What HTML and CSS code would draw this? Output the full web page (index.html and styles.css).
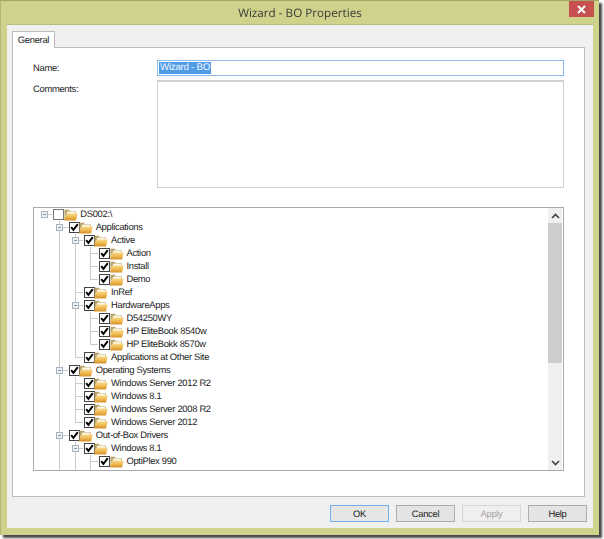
FILE: index.html
```html
<!DOCTYPE html>
<html lang="en">
<head>
<meta charset="utf-8">
<title>Wizard - BO Properties</title>
<link rel="stylesheet" href="styles.css">
</head>
<body>
<svg class="defs" width="0" height="0" aria-hidden="true">
  <defs>
    <linearGradient id="fg" x1="0" y1="0" x2="0" y2="1"><stop offset="0" stop-color="#f9d88a"/><stop offset=".5" stop-color="#f0b94f"/><stop offset="1" stop-color="#d48f28"/></linearGradient>
    <symbol id="on" viewBox="0 0 11 11"><rect x=".5" y=".5" width="10" height="10" fill="#fff" stroke="#444"/><path d="M2.2 5.2 4.4 7.8 8.8 2.2" fill="none" stroke="#000" stroke-width="2"/></symbol>
    <symbol id="off" viewBox="0 0 11 11"><rect x=".5" y=".5" width="10" height="10" fill="#fff" stroke="#777"/></symbol>
    <symbol id="dir" viewBox="0 0 14 12"><path d="M.5 11.5V.8h4.4l1 1.4h6v3H2z" fill="#b9a56c"/><path d="M3 2.6h8.4V6H3z" fill="#fdf8e8"/><path d="M2.2 4.6h11.6L12 11.6H0z" fill="url(#fg)"/></symbol>
  </defs>
</svg>
<div class="window">
  <header class="titlebar">
    <div class="title">Wizard - BO Properties</div>
    <div class="close"><svg width="9" height="9" viewBox="0 0 9 9"><path d="M1 1 8 8M8 1 1 8" stroke="#fff" stroke-width="2"/></svg></div>
  </header>
  <div class="client">
    <div class="tabs"><div class="tab">General</div></div>
    <div class="page">
      <div class="form">
        <label class="lbl">Name:</label>
        <div class="input"><span class="sel">Wizard - BO</span></div>
        <label class="lbl">Comments:</label>
        <div class="textarea"></div>
      </div>
      <div class="tree">
        <div class="nodes">
          <div class="row"><span class="c r"><b class="x"></b></span><svg class="chk"><use href="#off"/></svg><svg class="dir"><use href="#dir"/></svg><span class="t">DS002:\</span></div>
          <div class="row"><span class="c"></span><span class="c e"><b class="x"></b></span><svg class="chk"><use href="#on"/></svg><svg class="dir"><use href="#dir"/></svg><span class="t">Applications</span></div>
          <div class="row"><span class="c"></span><span class="c v"></span><span class="c e"><b class="x"></b></span><svg class="chk"><use href="#on"/></svg><svg class="dir"><use href="#dir"/></svg><span class="t">Active</span></div>
          <div class="row"><span class="c"></span><span class="c v"></span><span class="c v"></span><span class="c j"></span><svg class="chk"><use href="#on"/></svg><svg class="dir"><use href="#dir"/></svg><span class="t">Action</span></div>
          <div class="row"><span class="c"></span><span class="c v"></span><span class="c v"></span><span class="c j"></span><svg class="chk"><use href="#on"/></svg><svg class="dir"><use href="#dir"/></svg><span class="t">Install</span></div>
          <div class="row"><span class="c"></span><span class="c v"></span><span class="c v"></span><span class="c l"></span><svg class="chk"><use href="#on"/></svg><svg class="dir"><use href="#dir"/></svg><span class="t">Demo</span></div>
          <div class="row"><span class="c"></span><span class="c v"></span><span class="c j"></span><svg class="chk"><use href="#on"/></svg><svg class="dir"><use href="#dir"/></svg><span class="t">InRef</span></div>
          <div class="row"><span class="c"></span><span class="c v"></span><span class="c e"><b class="x"></b></span><svg class="chk"><use href="#on"/></svg><svg class="dir"><use href="#dir"/></svg><span class="t">HardwareApps</span></div>
          <div class="row"><span class="c"></span><span class="c v"></span><span class="c v"></span><span class="c j"></span><svg class="chk"><use href="#on"/></svg><svg class="dir"><use href="#dir"/></svg><span class="t">D54250WY</span></div>
          <div class="row"><span class="c"></span><span class="c v"></span><span class="c v"></span><span class="c j"></span><svg class="chk"><use href="#on"/></svg><svg class="dir"><use href="#dir"/></svg><span class="t">HP EliteBook 8540w</span></div>
          <div class="row"><span class="c"></span><span class="c v"></span><span class="c v"></span><span class="c l"></span><svg class="chk"><use href="#on"/></svg><svg class="dir"><use href="#dir"/></svg><span class="t">HP EliteBokk 8570w</span></div>
          <div class="row"><span class="c"></span><span class="c v"></span><span class="c l"></span><svg class="chk"><use href="#on"/></svg><svg class="dir"><use href="#dir"/></svg><span class="t">Applications at Other Site</span></div>
          <div class="row"><span class="c"></span><span class="c e"><b class="x"></b></span><svg class="chk"><use href="#on"/></svg><svg class="dir"><use href="#dir"/></svg><span class="t">Operating Systems</span></div>
          <div class="row"><span class="c"></span><span class="c v"></span><span class="c j"></span><svg class="chk"><use href="#on"/></svg><svg class="dir"><use href="#dir"/></svg><span class="t">Windows Server 2012 R2</span></div>
          <div class="row"><span class="c"></span><span class="c v"></span><span class="c j"></span><svg class="chk"><use href="#on"/></svg><svg class="dir"><use href="#dir"/></svg><span class="t">Windows 8.1</span></div>
          <div class="row"><span class="c"></span><span class="c v"></span><span class="c j"></span><svg class="chk"><use href="#on"/></svg><svg class="dir"><use href="#dir"/></svg><span class="t">Windows Server 2008 R2</span></div>
          <div class="row"><span class="c"></span><span class="c v"></span><span class="c l"></span><svg class="chk"><use href="#on"/></svg><svg class="dir"><use href="#dir"/></svg><span class="t">Windows Server 2012</span></div>
          <div class="row"><span class="c"></span><span class="c e"><b class="x"></b></span><svg class="chk"><use href="#on"/></svg><svg class="dir"><use href="#dir"/></svg><span class="t">Out-of-Box Drivers</span></div>
          <div class="row"><span class="c"></span><span class="c v"></span><span class="c e"><b class="x"></b></span><svg class="chk"><use href="#on"/></svg><svg class="dir"><use href="#dir"/></svg><span class="t">Windows 8.1</span></div>
          <div class="row"><span class="c"></span><span class="c v"></span><span class="c v"></span><span class="c j"></span><svg class="chk"><use href="#on"/></svg><svg class="dir"><use href="#dir"/></svg><span class="t">OptiPlex 990</span></div>
          <div class="row"><span class="c"></span><span class="c v"></span><span class="c v"></span><span class="c v"></span></div>
        </div>
        <div class="scrollbar">
          <div class="arrow"><svg width="9" height="6" viewBox="0 0 9 6"><path d="M1 5 4.5 1.5 8 5" fill="none" stroke="#444" stroke-width="1.7"/></svg></div>
          <div class="thumb"></div>
          <div class="track"></div>
          <div class="arrow"><svg width="9" height="6" viewBox="0 0 9 6"><path d="M1 1 4.5 4.5 8 1" fill="none" stroke="#444" stroke-width="1.7"/></svg></div>
        </div>
      </div>
    </div>
    <div class="buttons">
      <div class="btn btn-default">OK</div>
      <div class="btn">Cancel</div>
      <div class="btn btn-off">Apply</div>
      <div class="btn">Help</div>
    </div>
  </div>
</div>
</body>
</html>
```
FILE: styles.css
```css
* { box-sizing: border-box; }
html, body { margin: 0; background: #fff; }
body {
  width: 604px;
  height: 539px;
  overflow: hidden;
  font-family: "Liberation Sans", Arial, sans-serif;
  font-size: 9.4px;
  letter-spacing: -.3px;
  color: #222;
  text-rendering: geometricPrecision;
}
.defs { display: block; height: 0; }
.window {
  width: 599px;
  height: 535px;
  background: #cfd28a;
  border-top: 1px solid #a3a568;
  border-left: 1px solid #b4b678;
  box-shadow: 3px 3px 2px #4a4a4a;
  display: flex;
  flex-direction: column;
  filter: blur(.3px);
}
.titlebar {
  height: 23px;
  flex: none;
  display: flex;
  align-items: flex-start;
}
.title {
  flex: 1;
  text-align: center;
  padding-left: 30px;
  font-family: "Open Sans", sans-serif;
  font-size: 11.7px;
  letter-spacing: 0;
  line-height: 25px;
  color: #3a3a3a;
}
.close {
  width: 25px;
  height: 16px;
  margin-right: 5px;
  background: #c75050;
  display: flex;
  align-items: center;
  justify-content: center;
}
.client {
  flex: none;
  width: 586px;
  height: 504px;
  margin-left: 6px;
  background: #f0f0f0;
  border-top: 1px solid #b9bb7c;
  padding: 6px 6px 0 5px;
}
.tabs { display: flex; height: 17px; }
.tab {
  width: 43px;
  height: 17px;
  background: #fff;
  border: 1px solid #bdbdbd;
  border-bottom: 0;
  text-align: center;
  line-height: 15px;
  position: relative;
  z-index: 1;
}
.page {
  width: 573px;
  height: 450px;
  margin-top: -1px;
  background: #fff;
  border: 1px solid #bdbdbd;
  padding: 12px 0 0 20px;
}
.form {
  display: grid;
  grid-template-columns: 124px 407px;
  grid-template-rows: 16px 108px;
  row-gap: 4px;
}
.lbl { line-height: 15px; }
.lbl + .input + .lbl { line-height: 17px; }
.input {
  border: 1px solid #8dbbe9;
  background: #fff;
  padding: 1px;
  height: 16px;
}
.sel {
  display: inline-block;
  height: 12px;
  line-height: 12px;
  background: #4f9be6;
  color: #eef5ff;
  padding: 0 1px;
  font-size: 9.8px;
  vertical-align: top;
}
.textarea { border: 1px solid #cfcfcf; border-top-width: 2px; background: #fff; }
.tree {
  width: 531px;
  height: 264px;
  margin-top: 19px;
  border: 1px solid #a9a9b3;
  display: flex;
  overflow: hidden;
}
.nodes { flex: 1; min-width: 0; padding: 0 0 0 2.8px; overflow: hidden; }
.row {
  display: flex;
  align-items: center;
  height: 13px;
  white-space: nowrap;
}
.c {
  flex: none;
  width: 15.4px;
  height: 13px;
  display: flex;
  align-items: center;
  justify-content: center;
  --ln: #cbcbcb;
}
.v { background: linear-gradient(var(--ln), var(--ln)) 7px 0 / 1px 100% no-repeat; }
.j, .e {
  background:
    linear-gradient(var(--ln), var(--ln)) 7px 0 / 1px 100% no-repeat,
    linear-gradient(var(--ln), var(--ln)) 7px 6px / 9px 1px no-repeat;
}
.l {
  background:
    linear-gradient(var(--ln), var(--ln)) 7px 0 / 1px 7px no-repeat,
    linear-gradient(var(--ln), var(--ln)) 7px 6px / 9px 1px no-repeat;
}
.r { background: linear-gradient(var(--ln), var(--ln)) 7px 6px / 9px 1px no-repeat; }
.x {
  width: 7px;
  height: 7px;
  border: 1px solid #a8b4c0;
  background: linear-gradient(#7d95ad, #7d95ad) center / 3px 1px no-repeat, #eef1f4;
}
.chk { flex: none; width: 11px; height: 11px; margin-left: 1px; }
.dir { flex: none; width: 14px; height: 12px; margin-left: -.5px; }
.t { margin-left: 2.6px; line-height: 12px; padding-bottom: 1px; color: #222; }
.scrollbar {
  flex: none;
  width: 14px;
  margin-right: 1px;
  background: #f0f0f0;
  display: flex;
  flex-direction: column;
}
.arrow { flex: none; height: 15px; display: flex; align-items: center; justify-content: center; }
.thumb { flex: none; height: 140px; background: #cdcdcd; }
.track { flex: 1; }
.buttons {
  display: flex;
  justify-content: flex-end;
  gap: 7px;
  margin-top: 8px;
}
.btn {
  width: 59px;
  height: 17px;
  border: 1px solid #acacac;
  background: #e4e4e4;
  text-align: center;
  line-height: 15px;
  color: #222;
}
.btn-default { border-color: #6fb0ea; background: #e6e6e6; }
.btn-off { border-color: #d6d6d6; background: #efefef; color: #a5a5a5; }
```
